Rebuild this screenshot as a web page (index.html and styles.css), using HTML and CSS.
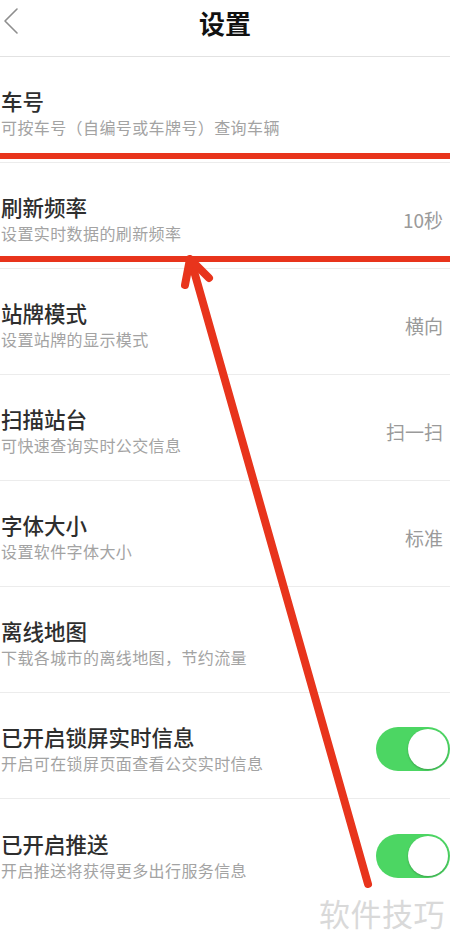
FILE: index.html
```html
<!DOCTYPE html>
<html lang="zh-CN">
<head>
  <meta charset="UTF-8">
  <meta name="viewport" content="width=device-width, initial-scale=1.0">
  <title>设置</title>
  <link rel="stylesheet" href="styles.css">
</head>
<body>

<header class="topbar">
  <div class="back">
    <svg width="20" height="28" viewBox="0 0 20 28">
      <polyline points="16,2 4,14 16,26" fill="none" stroke="#8e8e8e" stroke-width="1.6" stroke-linecap="round" stroke-linejoin="round"/>
    </svg>
  </div>
  <h1 class="title">设置</h1>
  <div></div>
</header>

<div class="list">
  <div class="row">
    <div class="text">
      <div class="name">车号</div>
      <div class="desc">可按车号（自编号或车牌号）查询车辆</div>
    </div>
  </div>
  <div class="row">
    <div class="text">
      <div class="name">刷新频率</div>
      <div class="desc">设置实时数据的刷新频率</div>
    </div>
    <div class="value">10秒</div>
  </div>
  <div class="row">
    <div class="text">
      <div class="name">站牌模式</div>
      <div class="desc">设置站牌的显示模式</div>
    </div>
    <div class="value">横向</div>
  </div>
  <div class="row">
    <div class="text">
      <div class="name">扫描站台</div>
      <div class="desc">可快速查询实时公交信息</div>
    </div>
    <div class="value">扫一扫</div>
  </div>
  <div class="row">
    <div class="text">
      <div class="name">字体大小</div>
      <div class="desc">设置软件字体大小</div>
    </div>
    <div class="value">标准</div>
  </div>
  <div class="row">
    <div class="text">
      <div class="name">离线地图</div>
      <div class="desc">下载各城市的离线地图，节约流量</div>
    </div>
  </div>
  <div class="row">
    <div class="text">
      <div class="name">已开启锁屏实时信息</div>
      <div class="desc">开启可在锁屏页面查看公交实时信息</div>
    </div>
    <div class="switch"><span class="knob"></span></div>
  </div>
  <div class="row">
    <div class="text">
      <div class="name">已开启推送</div>
      <div class="desc">开启推送将获得更多出行服务信息</div>
    </div>
    <div class="switch"><span class="knob"></span></div>
  </div>
</div>

<!-- annotation drawn over the screenshot -->
<svg class="marks" width="450" height="952" viewBox="0 0 450 952">
  <rect x="0" y="153" width="450" height="6" fill="#e8341c"/>
  <rect x="0" y="256" width="450" height="6" fill="#e8341c"/>
  <line x1="368" y1="884" x2="192" y2="264" stroke="#e8341c" stroke-width="8" stroke-linecap="round"/>
  <polyline points="185,285 190,259 209,278" fill="none" stroke="#e8341c" stroke-width="8" stroke-linecap="round" stroke-linejoin="round"/>
</svg>

<div class="watermark">软件技巧</div>

</body>
</html>
```

FILE: styles.css
```css
body {
  margin: 0;
  padding: 0;
  width: 450px;
  height: 952px;
  overflow: hidden;
  position: relative;
  background: #fff;
  font-family: "Noto Sans CJK SC", "Noto Sans", sans-serif;
  color: #222;
}

.topbar {
  display: grid;
  grid-template-columns: 1fr auto 1fr;
  height: 56px;
  border-bottom: 1px solid #e2e2e2;
  box-sizing: content-box;
}

.back {
  padding: 7px 0 0 1px;
}

.title {
  margin: 0;
  padding-top: 6px;
  font-size: 26px;
  line-height: 34px;
  font-weight: 700;
  color: #111;
}

.row {
  display: flex;
  align-items: center;
  height: 106px;
  box-sizing: border-box;
  padding: 31px 7px 24px 1px;
  border-bottom: 1px solid #ececec;
}

.row:last-child {
  border-bottom: none;
}

.text {
  flex: 1;
}

.name {
  font-size: 21.5px;
  line-height: 26px;
  font-weight: 500;
  color: #2e2e2e;
}

.desc {
  margin-top: 2px;
  font-size: 16px;
  line-height: 22px;
  color: #a3a3a3;
  letter-spacing: 0.4px;
}

.value {
  font-size: 19px;
  color: #9a9a9a;
}

.switch {
  display: flex;
  justify-content: flex-end;
  align-items: center;
  width: 74px;
  height: 44px;
  margin-right: -7px;
  padding: 0 2px;
  box-sizing: border-box;
  border-radius: 22px;
  background: #4cd663;
}

.knob {
  width: 40px;
  height: 40px;
  border-radius: 50%;
  background: #fff;
  box-shadow: 0 1px 2px rgba(0, 0, 0, 0.25);
}

.marks {
  position: absolute;
  top: 0;
  left: 0;
  pointer-events: none;
}

.watermark {
  position: absolute;
  right: 5px;
  top: 893px;
  font-size: 31px;
  line-height: 40px;
  color: #d9d9d9;
  letter-spacing: 0.5px;
}
```
